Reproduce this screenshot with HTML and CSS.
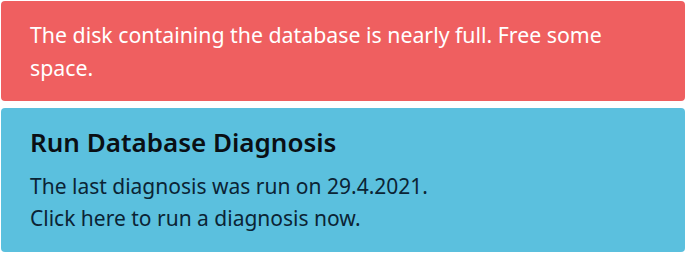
FILE: index.html
```html
<!DOCTYPE html>
<html>
<head>
<meta charset="utf-8">
<link rel="stylesheet" href="styles.css">
</head>
<body>
<div class="stack">
  <div class="alert alert-danger">The disk containing the database is nearly full. Free some space.</div>
  <div class="alert alert-info">
    <h2 class="alert-title">Run Database Diagnosis</h2>
    <p class="alert-text">The last diagnosis was run on 29.4.2021.<br>Click here to run a diagnosis now.</p>
  </div>
</div>
</body>
</html>
```

FILE: styles.css
```css
html, body {
  margin: 0;
  padding: 0;
  background: #ffffff;
}
body {
  padding: 1px 2px 2px 1px;
  font-family: "Noto Sans", "Open Sans", sans-serif;
}
.stack {
  display: flex;
  flex-direction: column;
  gap: 7px;
}
.alert {
  border-radius: 4px;
  padding: 16px 29px;
  box-sizing: border-box;
}
.alert-danger {
  background: #ef5f60;
  color: #ffffff;
  height: 100px;
  padding-top: 17px;
  font-size: 21.3px;
  line-height: 33px;
}
.alert-info {
  background: #5bc0de;
  color: #0b2435;
  height: 144px;
  padding-top: 17px;
  font-size: 21px;
  line-height: 32px;
}
.alert-title {
  margin: 0 0 11px;
  font-size: 26px;
  font-weight: 600;
  line-height: 34px;
  color: #0a0f14;
}
.alert-text {
  margin: 0;
}
```
